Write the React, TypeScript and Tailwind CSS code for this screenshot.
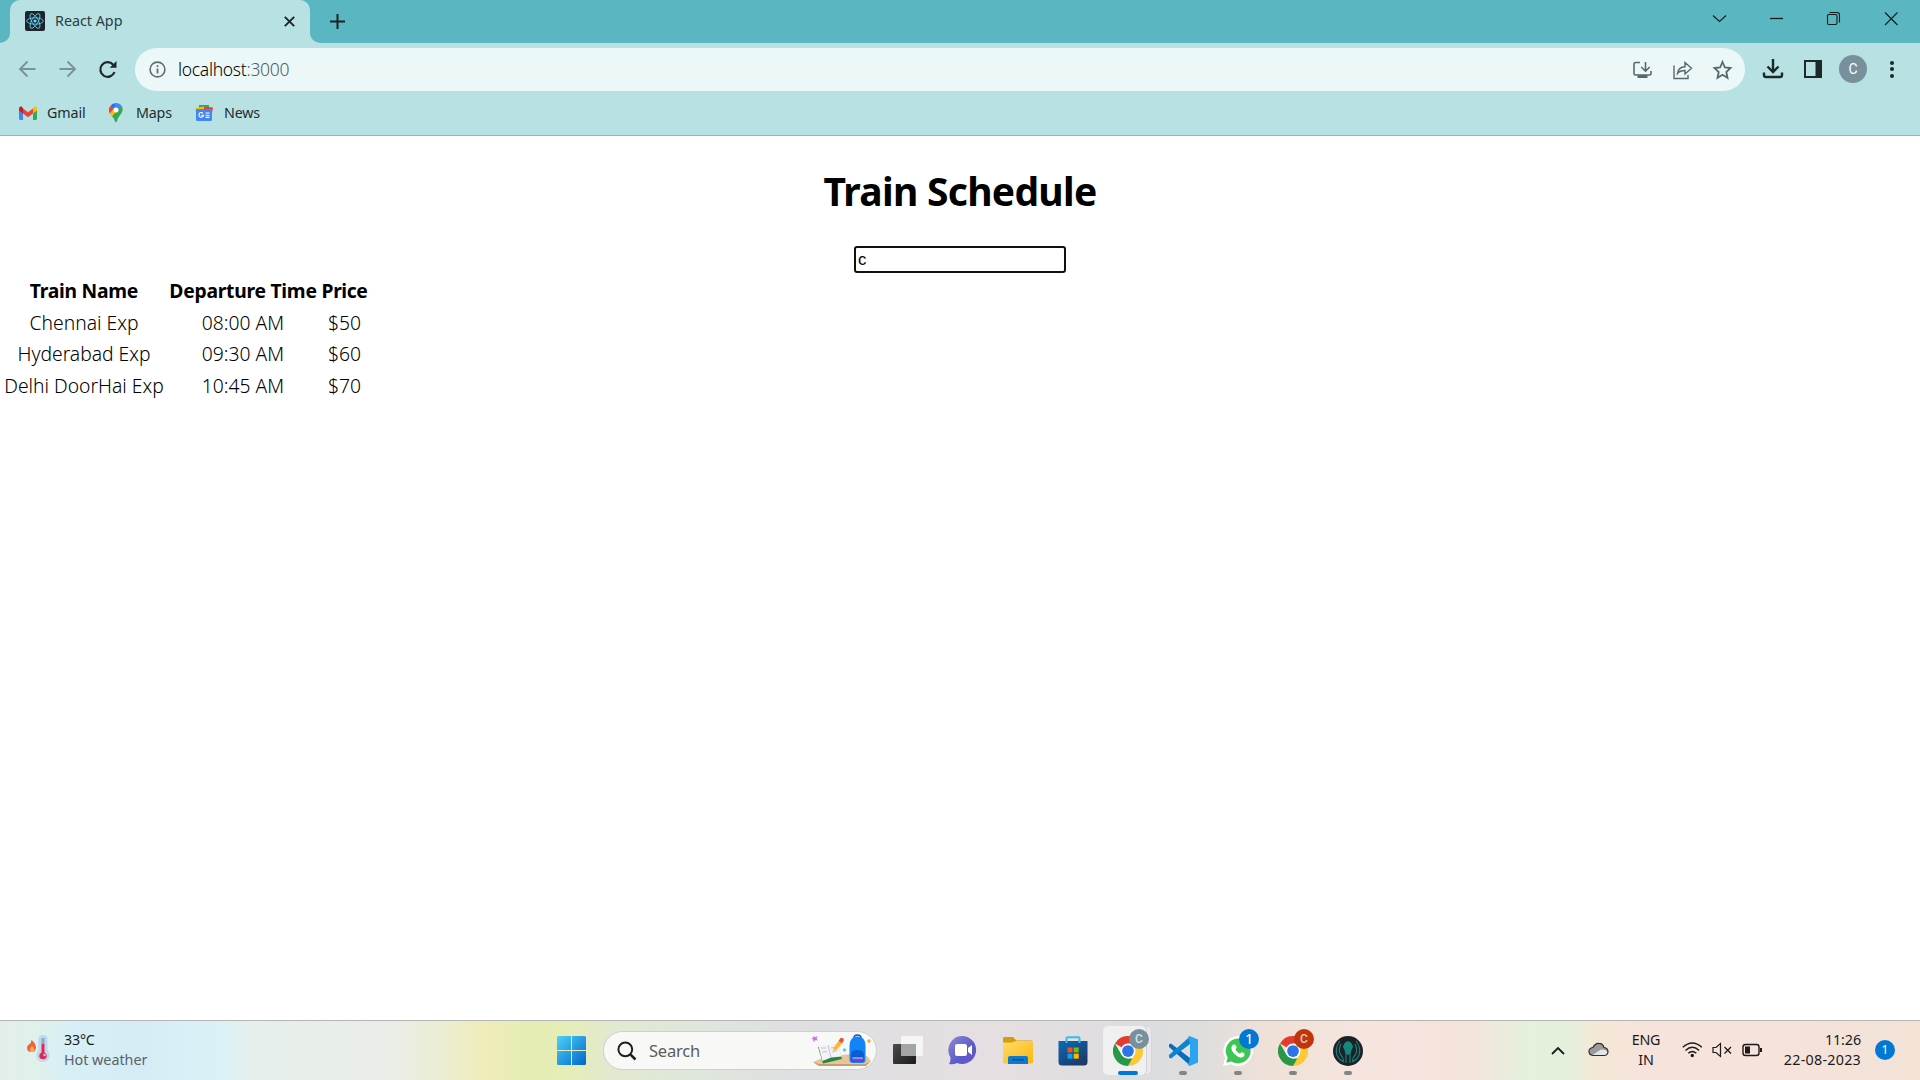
import React from "react";

const SANS = "font-['Noto_Sans','Open_Sans',sans-serif]";

type Box = { className?: string };

function ReactMark() {
  return (
    <svg width="20" height="20" viewBox="0 0 20 20" className="shrink-0">
      <rect width="20" height="20" rx="2" fill="#20232a" />
      <g fill="none" stroke="#61dafb" strokeWidth="0.8">
        <ellipse cx="10" cy="10" rx="8.3" ry="3.2" />
        <ellipse cx="10" cy="10" rx="8.3" ry="3.2" transform="rotate(60 10 10)" />
        <ellipse cx="10" cy="10" rx="8.3" ry="3.2" transform="rotate(120 10 10)" />
      </g>
      <circle cx="10" cy="10" r="1.6" fill="#61dafb" />
    </svg>
  );
}

function Chrome({ className }: Box) {
  return (
    <svg width="30" height="30" viewBox="0 0 48 48" className={className}>
      <path d="M24 24 3.2 12A24 24 0 0 1 44.8 12Z" fill="#e33b2e" />
      <path d="M24 12H44.8A24 24 0 0 1 24 48L34.4 30Z" fill="#fcc934" />
      <path d="M3.2 12 13.6 30 24 36H31L24 48A24 24 0 0 1 3.2 12Z" fill="#2a9747" />
      <circle cx="24" cy="24" r="12" fill="#fff" />
      <circle cx="24" cy="24" r="9.4" fill="#2c74e8" />
    </svg>
  );
}

function TitleBar() {
  return (
    <div className="flex h-[43px] bg-[#5ab7c1]">
      <div className="flex w-[10px] items-end bg-[#b8e1e4]">
        <div className="h-[43px] w-[10px] rounded-br-[10px] bg-[#5ab7c1]" />
      </div>
      <div className="flex h-[43px] w-[300px] items-center rounded-t-[10px] bg-[#b8e1e4] pb-px pl-[15px] pr-[15px]">
        <ReactMark />
        <span className="ml-[10px] flex-1 text-[14.3px] leading-[40px] text-[#2c3c40]">React App</span>
        <svg width="11" height="11" viewBox="0 0 11 11" stroke="#1b2426" strokeWidth="1.9">
          <path d="M.8.8 10.2 10.2M10.2.8.8 10.2" />
        </svg>
      </div>
      <div className="w-[10px] bg-[#b8e1e4]">
        <div className="h-[43px] rounded-bl-[10px] bg-[#5ab7c1]" />
      </div>
      <div className="flex flex-1 items-start">
        <svg width="15" height="15" viewBox="0 0 15 15" stroke="#1b2426" strokeWidth="2" className="ml-[10px] mt-[14px]">
          <path d="M7.5 0V15M0 7.5H15" />
        </svg>
        <svg width="190" height="15" viewBox="0 0 190 15" fill="none" stroke="#101b1c" strokeWidth="1.1" className="ml-auto mr-[20px] mt-[11px]">
          <path d="M3 4.5 9.5 10.5 16 4.5" />
          <path d="M60 7.5H73" strokeWidth="1.3" />
          <rect x="117.5" y="3.5" width="9.5" height="10" rx="1.5" />
          <path d="M119.5 1.5H127Q129.500 1.500 129.500 4V11.500" />
          <path d="M175 1.5 187.5 14M187.5 1.5 175 14" />
        </svg>
      </div>
    </div>
  );
}

function Toolbar() {
  return (
    <div className="flex h-[53px] items-center">
      <svg width="135" height="48" viewBox="0 0 135 48" fill="none" strokeWidth="1.8" className="shrink-0">
        <g stroke="#789296">
          <path d="M35.5 23H20.5M27.5 15.5 20 23 27.5 30.500" />
          <path d="M59.500 23H74.500M67.500 15.500 75 23 67.500 30.500" />
        </g>
        <path d="M113.200 18.800A7.300 7.300 0 1 0 114.500 26" stroke="#1d2628" strokeWidth="2.200" />
        <path d="M116.500 15V21.800H109.700Z" fill="#1d2628" />
      </svg>
      <div className="flex h-[43px] w-[1610px] items-center rounded-full bg-[#ecf8f8] pl-[14px]">
        <svg width="17" height="17" viewBox="0 0 17 17" fill="none" stroke="#5f6b6d" strokeWidth="1.600">
          <circle cx="8.500" cy="8.500" r="7.400" />
          <path d="M8.500 7.500V12.500M8.500 4.300V6.100" strokeWidth="1.800" />
        </svg>
        <span className="-mt-px ml-[12px] text-[17.5px] font-light leading-[42px] tracking-[-0.3px] text-black">
          localhost<span className="text-[#4c5f61]">:3000</span>
        </span>
        <svg width="106" height="24" viewBox="0 0 106 24" fill="none" stroke="#5a686a" strokeWidth="1.600" className="ml-auto mr-[12px]">
          <path d="M13 4.500H8.500Q7 4.500 7 6V15.500Q7 17 8.500 17H22.500Q24 17 24 15.500V13M18.500 4V12M14.300 9 18.500 13.200 22.700 9" />
          <path d="M10.500 17H20.500V20H10.500Z" fill="#5a686a" stroke="none" />
          <path d="M47 7.500V20.500H61V17M50.500 15.500C51 11 54 9 58 8.800V4.500L64.500 10.300 58 16V12.500C54.500 12.500 52 13.500 50.500 15.500Z" strokeWidth="1.400" />
          <path d="M95.500 4 97.900 9.500 103.500 10 99.300 14 100.500 19.800 95.500 16.800 90.500 19.800 91.700 14 87.500 10 93.100 9.500Z" strokeWidth="1.800" />
        </svg>
      </div>
      <svg width="62" height="24" viewBox="0 0 62 24" fill="none" stroke="#1c2829" strokeWidth="2.200" className="-mt-px ml-[16px]">
        <path d="M12 2V14.500M6.500 9.500 12 15 17.500 9.500M3 15.500V18Q3 20 5 20H19Q21 20 21 18V15.500" strokeWidth="2.400" />
        <path d="M44 4H60V20H44Z" strokeWidth="2" />
        <path d="M54.500 3H61V21H54.500Z" fill="#1c2829" stroke="none" />
      </svg>
      <div className="-mt-px ml-[16px] flex h-[28px] w-[28px] items-center justify-center rounded-full bg-[#78909c] font-['Roboto',sans-serif] text-[14px] text-white">C</div>
      <div className="-mt-px ml-[23px] flex flex-col gap-[2.500px]">
        <span className="h-[4px] w-[4px] rounded-full bg-[#1c2829]" />
        <span className="h-[4px] w-[4px] rounded-full bg-[#1c2829]" />
        <span className="h-[4px] w-[4px] rounded-full bg-[#1c2829]" />
      </div>
    </div>
  );
}

function Bookmarks() {
  return (
    <div className="flex h-[40px] items-center border-b border-[#94b8bb] pb-[6px] text-[14.3px] text-[#1f2d2f]">
      <svg width="18" height="14" viewBox="0 0 18 14" className="ml-[19px]">
        <path d="M0 3V12.500Q0 14 1.500 14H4V6Z" fill="#4285f4" />
        <path d="M18 3V12.500Q18 14 16.500 14H14V6Z" fill="#34a853" />
        <path d="M4 2.500 9 6.300 14 2.500V7.500L9 11.200 4 7.500Z" fill="#ea4335" />
        <path d="M0 2.800Q0 0 2.500 .6L4 2V7.500L0 4.500Z" fill="#c5221f" />
        <path d="M18 2.800Q18 0 15.500 .6L14 2V7.500L18 4.500Z" fill="#fbbc04" />
      </svg>
      <span className="ml-[10px] w-[62px] tracking-[-0.1px]">Gmail</span>
      <svg width="14" height="20" viewBox="0 0 14 20">
        <path d="M7 0A7 7 0 0 0 1.500 2.700L5 6Z" fill="#1a73e8" />
        <path d="M1.500 2.700A7 7 0 0 0 .8 10.500L5 6Z" fill="#ea4335" />
        <path d="M7 0A7 7 0 0 1 13 3.500L8.500 8 5 5Z" fill="#4285f4" />
        <path d="M.8 10.500 3 13.500 10 5.500 5 6Z" fill="#fbbc04" />
        <path d="M13 3.500C15.500 9 10 12 8.500 16.500 8 20 6 20 5.500 17 5 15.500 4 14.500 3 13.500L9 6.500Z" fill="#34a853" />
        <circle cx="7" cy="7" r="2.500" fill="#fff" />
      </svg>
      <span className="ml-[13px] w-[59px] tracking-[-0.2px]">Maps</span>
      <svg width="18" height="16" viewBox="0 0 18 16">
        <path d="M4 0H14V5H4Z" fill="#34a853" />
        <path d="M0 3 9 1.500V8H1Z" fill="#fbbc04" />
        <path d="M18 2.500 9 1.500V8H17Z" fill="#ea4335" />
        <rect x="1" y="4" width="16" height="12" rx="1.200" fill="#4285f4" />
        <path d="M8 8.300A2.300 2.300 0 1 0 8.500 10.300H6.300M10.500 8H14.500M10.500 10.200H14.500M10.500 12.400H14.500" fill="none" stroke="#fff" strokeWidth="1.100" />
      </svg>
      <span className="ml-[11px] tracking-[-0.2px]">News</span>
    </div>
  );
}

const rows = [
  ["Chennai Exp", "08:00 AM", "$50"],
  ["Hyderabad Exp", "09:30 AM", "$60"],
  ["Delhi DoorHai Exp", "10:45 AM", "$70"],
];

function Page() {
  return (
    <main className="flex-1 bg-white text-black">
      <h1 className="pt-[27px] text-center text-[39px] font-bold leading-[56px] tracking-[-0.7px]">Train Schedule</h1>
      <div className="mt-[27px] flex justify-center">
        <input
          defaultValue="c"
          className="h-[27px] w-[212px] rounded-[3px] border-2 border-[#101010] px-[2px] font-['Liberation_Sans',sans-serif] text-[16.67px] outline-none"
        />
      </div>
      <table className="mt-[2px] table-fixed border-collapse text-center text-[19.3px] leading-[31.5px]">
        <colgroup>
          <col className="w-[168px]" />
          <col className="w-[150px]" />
          <col className="w-[53px]" />
        </colgroup>
        <thead>
          <tr>
            <th className="whitespace-nowrap p-0 tracking-[-0.25px]">Train Name</th>
            <th className="whitespace-nowrap p-0 tracking-[-0.25px]">Departure Time</th>
            <th className="whitespace-nowrap p-0 tracking-[-0.4px]">Price</th>
          </tr>
        </thead>
        <tbody className="font-light text-black">
          {rows.map((r) => (
            <tr key={r[0]}>
              {r.map((c) => (
                <td key={c} className="whitespace-nowrap p-0">{c}</td>
              ))}
            </tr>
          ))}
        </tbody>
      </table>
    </main>
  );
}

function Slot({ children, dot = true }: { children: React.ReactNode; dot?: boolean }) {
  return (
    <div className="relative flex h-[59px] w-[55px] shrink-0 items-center justify-center">
      {children}
      {dot && <span className="absolute bottom-[5px] left-[24px] h-[4px] w-[8px] rounded-full bg-[#858484]" />}
    </div>
  );
}

function SearchArt() {
  return (
    <svg width="62" height="34" viewBox="0 0 62 34" className="ml-auto mr-[3px]">
      <path d="M2 28 14 23 40 20 56 22 60 27 54 31 8 32Z" fill="#e6c49c" />
      <path d="M2 28 8 30H54L60 27 55 32H8Z" fill="#c99d6e" />
      <path d="M7 13 27 11 31 25 12 29.500Z" fill="#25873f" />
      <path d="M7 10.500 17 11 27 9 30.500 22.500 20 23.500 11.500 27Z" fill="#f5f2f8" />
      <path d="M17 11 20 23.500M10 14 15 14M11 18 16 17.500M20 14 25 13M21 18 26 16.500" stroke="#b9b5c4" strokeWidth="0.800" fill="none" />
      <path d="M22.500 14 27.500 7 31 9.500 26 15.500 22 17Z" fill="#ffb52e" />
      <path d="M27.500 7 29.500 4Q32 3 33 6L31 9.500Z" fill="#e9543f" />
      <path d="M2 2 4 3.300 6.500 2 5.500 4.300 7 6.500 4.500 6 2.500 8 2.300 5.500 0 4.500 2.300 4Z" fill="#d16bf0" />
      <path d="M43 4Q43 1 46.500 1T50 4" fill="none" stroke="#0c55b5" strokeWidth="1.600" />
      <path d="M38.500 12Q38.500 2.500 46.500 2.500T54.500 12V26Q54.500 29 51 29H42Q38.500 29 38.500 26Z" fill="#1384f5" />
      <path d="M40 21Q40 16 46.500 16T53 21V26Q53 28 50 28H43Q40 28 40 26Z" fill="#075ed1" />
      <path d="M41 24H52.500V25.500Q52.500 27.500 50.500 27.500H43Q41 27.500 41 25.500Z" fill="#604be0" />
      <path d="M41.500 24H52" stroke="#eec6ff" strokeWidth="1" />
      <circle cx="33.500" cy="16" r="1.700" fill="#57d1df" />
      <circle cx="58" cy="7" r="1.700" fill="#ffa51e" />
    </svg>
  );
}

function TaskIcons() {
  return (
    <div className="flex h-[59px] items-center">
      <svg width="29" height="29" viewBox="0 0 29 29">
        <defs>
          <linearGradient id="win" x1="0" y1="0" x2="1" y2="1">
            <stop offset="0" stopColor="#4fd0fb" />
            <stop offset="1" stopColor="#0067c8" />
          </linearGradient>
        </defs>
        <path d="M1.500 0H14V14H0V1.500Q0 0 1.500 0ZM15 0H27.500Q29 0 29 1.500V14H15ZM0 15H14V29H1.500Q0 29 0 27.500ZM15 15H29V27.500Q29 29 27.500 29H15Z" fill="url(#win)" />
      </svg>
      <div className="ml-[17px] mr-[3px] flex h-[39px] w-[274px] items-center rounded-full border border-[#cdd0cc] bg-[#f8f9f7] pl-[13px]">
        <svg width="20" height="20" viewBox="0 0 20 20" fill="none" stroke="#202020" strokeWidth="2">
          <circle cx="8.300" cy="8.300" r="6.900" />
          <path d="M13.300 13.300 18.500 18.500" strokeWidth="2.600" />
        </svg>
        <span className="ml-[12px] mt-px text-[16.5px] tracking-[-0.2px] text-[#5b5d5b]">Search</span>
        <SearchArt />
      </div>
      <Slot dot={false}>
        <svg width="30" height="29" viewBox="0 0 30 29">
          <defs>
            <linearGradient id="tv" x1="0" y1="0" x2="1" y2="1">
              <stop offset="0" stopColor="#4c4c4c" />
              <stop offset="1" stopColor="#1b1b1b" />
            </linearGradient>
          </defs>
          <rect y="8" width="23" height="20" rx="1" fill="url(#tv)" />
          <rect x="8" y="0" width="22" height="20" rx="1" fill="#f6f6f6" />
          <path d="M8 8H23V20H9Q8 20 8 19Z" fill="#a5a5a5" />
        </svg>
      </Slot>
      <Slot dot={false}>
        <svg width="30" height="29" viewBox="0 0 30 29">
          <defs>
            <linearGradient id="chat" x1="0" y1="0" x2="1" y2="1">
              <stop offset="0" stopColor="#8c8ad8" />
              <stop offset="0.6" stopColor="#5b5bc8" />
              <stop offset="1" stopColor="#6a55c4" />
            </linearGradient>
          </defs>
          <path d="M15 0A14 14 0 1 1 9 27Q5 29 1 28 3 25 2.300 21A14 14 0 0 1 15 0Z" fill="url(#chat)" />
          <rect x="7" y="8" width="12" height="12" rx="2" fill="#fff" />
          <path d="M20 12 24 9V19L20 16Z" fill="#fff" />
        </svg>
      </Slot>
      <Slot dot={false}>
        <svg width="30" height="27" viewBox="0 0 30 27">
          <defs>
            <linearGradient id="fold" x1="0" y1="0" x2="1" y2="1">
              <stop offset="0" stopColor="#ffdc69" />
              <stop offset="1" stopColor="#fbb70f" />
            </linearGradient>
          </defs>
          <path d="M0 1.500Q0 0 1.500 0H10L13.500 3.500H28Q30 3.500 30 5.500V12H0Z" fill="#d99a0b" />
          <path d="M0 5.500H9L13 4H30V25Q30 26.500 28 26.500H2Q0 26.500 0 25Z" fill="url(#fold)" />
          <path d="M5 27V21Q5 19 7 19H23Q25 19 25 21V27Z" fill="#0f79d0" />
          <path d="M9 22.800H21" stroke="#0a4f96" strokeWidth="1.500" />
        </svg>
      </Slot>
      <Slot dot={false}>
        <svg width="30" height="30" viewBox="0 0 30 30">
          <defs>
            <linearGradient id="store" x1="0" y1="0" x2="0.700" y2="1">
              <stop offset="0" stopColor="#0a6cb5" />
              <stop offset="1" stopColor="#1d3a68" />
            </linearGradient>
          </defs>
          <path d="M8.500 7V2Q8.500 1.200 9.500 1.200H20.500Q21.500 1.200 21.500 2V7" fill="none" stroke="#39bdf0" strokeWidth="2" />
          <path d="M.5 5H29.500V26Q29.500 29.500 26 29.500H4Q.5 29.500 .5 26Z" fill="url(#store)" />
          <path d="M9.500 11.500H14.500V16.500H9.500Z" fill="#f25022" />
          <path d="M15.700 11.500H20.700V16.500H15.700Z" fill="#7fba00" />
          <path d="M9.500 17.700H14.500V22.700H9.500Z" fill="#00a4ef" />
          <path d="M15.700 17.700H20.700V22.700H15.700Z" fill="#ffb900" />
          <path d="M8.500 5V7M21.500 5V7" stroke="#39bdf0" strokeWidth="2" />
        </svg>
      </Slot>
      <div className="relative flex h-[59px] w-[55px] items-center justify-center">
        <div className="absolute left-[3px] top-[5px] h-[49px] w-[49px] rounded-[5px] border border-[#d6d6d8] bg-[#e9e9eb]" />
        <div className="absolute left-[3px] top-[5px] h-[49px] w-[44px] rounded-[5px] border-r border-[#d0d0d3] bg-[#f1f0f1]" />
        <Chrome className="relative" />
        <div className="absolute left-[29px] top-[8px] flex h-[20px] w-[20px] items-center justify-center rounded-full bg-[#78909c] font-['Roboto',sans-serif] text-[12px] font-medium text-[#dbe4e8]">C</div>
        <div className="absolute bottom-[5px] left-[18px] h-[4px] w-[20px] rounded-full bg-[#0078d7]" />
      </div>
      <Slot>
        <svg width="30" height="30" viewBox="0 0 30 30">
          <path d="M1 8.500 3 7.500 22 22V29.500L1 11Z" fill="#0a6cb8" />
          <path d="M1 21.500 3 22.500 22 8V.5L1 19Z" fill="#0e83d2" />
          <path d="M21.500 0 30 3.500V26.500L21.500 30 20 29 22 22V8L20 1Z" fill="#2ba5f0" />
        </svg>
      </Slot>
      <Slot>
        <svg width="30" height="30" viewBox="0 0 30 30">
          <path d="M15 0A15 15 0 1 1 8 28.300L0 30 2 22A15 15 0 0 1 15 0Z" fill="#fff" />
          <path d="M15.200 2.400A12.500 12.500 0 1 1 8.500 25.500L3.300 26.800 4.700 21.500A12.500 12.500 0 0 1 15.200 2.400Z" fill="#3ec655" />
          <path d="M10.500 8.500Q12 8 12.800 9.500L13.700 11.600 12.500 13.500Q14 16.500 17 17.700L18.600 16 21.500 17.400Q22 20 19.500 21.300 16 22.500 11.700 18.300 7 13.300 9 9.700Z" fill="#fff" />
        </svg>
        <div className="absolute left-[29px] top-[8px] flex h-[20px] w-[20px] items-center justify-center rounded-full bg-[#0078d4] text-[13.5px] font-medium text-white">1</div>
      </Slot>
      <Slot>
        <Chrome />
        <div className="absolute left-[29px] top-[8px] flex h-[20px] w-[20px] items-center justify-center rounded-full bg-[#bf360c] font-['Roboto',sans-serif] text-[12px] font-medium text-[#f0c8bb]">C</div>
      </Slot>
      <Slot>
        <svg width="30" height="30" viewBox="0 0 30 30">
          <circle cx="15" cy="15" r="15" fill="#1b2226" />
          <g fill="none" stroke="#17867f" strokeWidth="1.100">
            <path d="M7 5Q1.500 12 4 19 6 24 11 26M23 5Q28.500 12 26 19 24 24 19 26M8 8Q5 14 7.500 18.500 10 21 10.500 25M22 8Q25 14 22.500 18.500 20 21 19.500 25M13 18V27M17 18V27" />
          </g>
          <path d="M15 5Q19.500 6.500 20 11L18.500 14 17.500 18Q15 19.500 12.500 18L11.500 14 10 11Q10.500 6.500 15 5Z" fill="#17867f" />
        </svg>
      </Slot>
    </div>
  );
}

function Taskbar() {
  return (
    <footer className="flex h-[60px] border-t border-[#b5b5b3] bg-[linear-gradient(90deg,#e4eee9_0px,#dff1ec_40px,#d7eff5_65px,#d5ecf6_140px,#daf2f6_220px,#e6efec_250px,#e9ede8_390px,#ecedd8_430px,#efecba_485px,#e5edb3_530px,#e6edb9_570px,#e1e9cf_610px,#dfe6dc_700px,#dedfe2_810px,#e2dfe1_900px,#e6dfe1_1000px,#dcdde0_1150px,#dfdddd_1200px,#efe1d8_1270px,#f6e5de_1360px,#f4e4dc_1470px,#e4f1dc_1530px,#e5f0dc_1570px,#f4e8d5_1595px,#f6e4dc_1640px,#f5e3dc_1780px,#f3e2d6_1920px)]">
      <div className="flex w-[557px]">
        <svg width="26" height="30" viewBox="0 0 26 30" className="ml-[26px] mt-[13px]">
          <path d="M5.500 6Q9.500 9 10 13 10 18 5.500 18T1 13.500Q1 11 3.500 10Q5 9 5.500 6Z" fill="#f4623d" />
          <path d="M6 12Q9 15 8 17 5.500 18.500 4 17 3.500 14 6 12Z" fill="#ffb04f" />
          <path d="M12.500 5Q12.500 1 17 1T21.500 5V16Q23.500 18.500 23.500 21 23.500 28 17 28T10.500 21Q10.500 18.500 12.500 16Z" fill="#bcd8f3" />
          <path d="M15.500 4H18.500V10H15.500Z" fill="#8ea9c4" />
          <path d="M15.500 10H18.500V18.500Q20.800 19.500 20.800 22 20.500 25.300 17 25.300T13.200 22Q13.200 19.500 15.500 18.500Z" fill="#e2294d" />
          <circle cx="18.500" cy="21" r="1.200" fill="#ffc3cd" />
        </svg>
        <div className="ml-[12px] mt-[9px] text-[14.3px] leading-[20px]">
          <div className="tracking-[-0.2px] text-[#1b1b1b]">33°C</div>
          <div className="text-[#5b6366]">Hot weather</div>
        </div>
      </div>
      <TaskIcons />
      <div className="ml-auto flex h-[59px] items-center text-[14.3px] leading-[20px] text-[#1b1b1b]">
        <svg width="14" height="9" viewBox="0 0 14 9" fill="none" stroke="#1b1b1b" strokeWidth="1.800" className="-mt-px">
          <path d="M1 8 7 2 13 8" />
        </svg>
        <svg width="21" height="15" viewBox="0 0 21 15" className="-mt-[2px] ml-[23px]">
          <path d="M5 13.500Q1 13 1 9.500 1 6 5 5.500 7 1 11 1.300 15 1.500 16 5.500 20 6 20 10 19.500 13.500 16 13.500Z" fill="#9b9b9b" stroke="#2c2c2c" strokeWidth="1.200" />
          <path d="M4.500 13 13 7.500Q19.200 7.500 19.200 10.500 18.500 13 16 13Z" fill="#e4e4e4" />
        </svg>
        <div className="-mt-px ml-[22px] w-[30px] text-center tracking-[-0.2px]">ENG<br />IN</div>
        <svg width="80" height="20" viewBox="0 0 80 20" fill="none" stroke="#1b1b1b" strokeWidth="1.400" className="-mt-px ml-[21px]">
          <path d="M.8 7.300Q10.300 -1.500 19.800 7.300M3.500 10.500Q10.300 4 17.100 10.500M6.300 13.300Q10.300 9.500 14.300 13.300" />
          <circle cx="10.300" cy="15.500" r="1.700" fill="#1b1b1b" stroke="none" />
          <path d="M31 7.500H34L38.500 3.500V16.500L34 12.500H31Z" strokeWidth="1.200" />
          <path d="M42.500 7 49 13.500M49 7 42.500 13.500" strokeWidth="1.300" />
          <rect x="61" y="4.500" width="16" height="11" rx="2.500" />
          <path d="M63 6.500H68V13.500H63Z M78 8H80V12H78Z" fill="#1b1b1b" stroke="none" />
        </svg>
        <div className="-mt-[2px] ml-[13px] mr-[-1px] w-[86px] whitespace-nowrap text-right"><span className="tracking-[-0.1px]">11:26</span><br /><span className="tracking-[0.25px]">22-08-2023</span></div>
        <div className="-mt-px ml-[15px] mr-[25px] flex h-[20px] w-[20px] items-center justify-center rounded-full bg-[#0078d4] text-[12px] text-white">1</div>
      </div>
    </footer>
  );
}

export default function App() {
  return (
    <div className={`${SANS} flex h-[1080px] w-[1920px] flex-col overflow-hidden bg-[#b8e1e4]`}>
      <TitleBar />
      <Toolbar />
      <Bookmarks />
      <Page />
      <Taskbar />
    </div>
  );
}
